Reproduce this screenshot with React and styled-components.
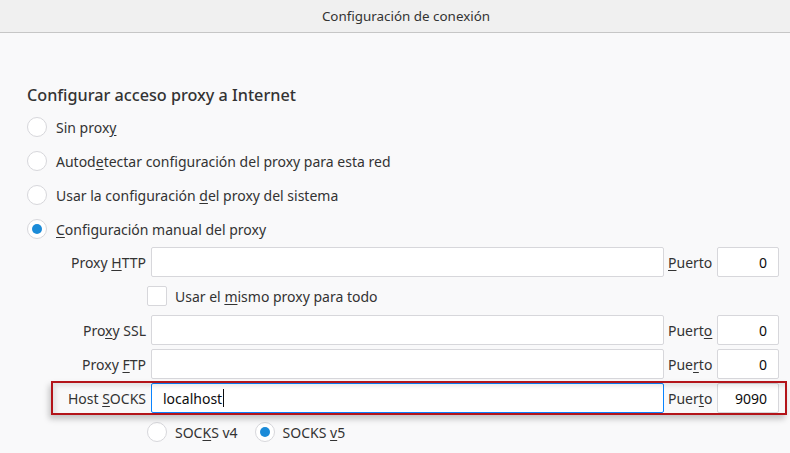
import React from 'react'
import styled, { createGlobalStyle } from 'styled-components'

const GlobalStyle = createGlobalStyle`
  html, body {
    margin: 0;
    padding: 0;
    background: #f9f9fa;
  }
  body {
    font-family: "Noto Sans", "Open Sans", sans-serif;
    color: #333;
  }
`

function App () {
  const http = { label: <>Proxy <U>H</U>TTP</>, port: <><U>P</U>uerto</>, value: '', portValue: '0' }
  const ssl = { label: <>Pro<U>x</U>y SSL</>, port: <>Puert<U>o</U></>, value: '', portValue: '0' }
  const ftp = { label: <>Proxy <U>F</U>TP</>, port: <>Pue<U>r</U>to</>, value: '', portValue: '0' }
  const socks = { label: <>Host <U>S</U>OCKS</>, port: <>Puer<U>t</U>o</>, value: 'localhost', portValue: '9090', focused: true }

  return (
    <Page>
      <GlobalStyle />
      <TitleBar>Configuración de conexión</TitleBar>
      <Content>
        <Heading>Configurar acceso proxy a Internet</Heading>
        <RadioList>
          <RadioRow><Radio /><span>Sin prox<U>y</U></span></RadioRow>
          <RadioRow><Radio /><span>Autod<U>e</U>tectar configuración del proxy para esta red</span></RadioRow>
          <RadioRow><Radio /><span>Usar la configuración <U>d</U>el proxy del sistema</span></RadioRow>
          <RadioRow><Radio checked /><span><U>C</U>onfiguración manual del proxy</span></RadioRow>
        </RadioList>
        <Fields>
          <Field row={http} />
          <OptionRow>
            <Checkbox />
            <span>Usar el <U>m</U>ismo proxy para todo</span>
          </OptionRow>
          <Field row={ssl} />
          <Field row={ftp} />
          <Field row={socks} highlighted />
          <OptionRow>
            <Radio />
            <OptionText>SOC<U>K</U>S v4</OptionText>
            <Radio checked />
            <span>SOCKS <U>v</U>5</span>
          </OptionRow>
        </Fields>
      </Content>
    </Page>
  )
}

const Field = ({ row, highlighted }) => (
  <FieldRow $highlighted={highlighted}>
    <FieldLabel>{row.label}</FieldLabel>
    <TextBox $focused={row.focused}>
      {row.value}
      {row.focused && <Caret />}
    </TextBox>
    <PortLabel>{row.port}</PortLabel>
    <TextBox $alignRight>{row.portValue}</TextBox>
  </FieldRow>
)

const Page = styled.div`
  width: 790px;
  height: 453px;
  overflow: hidden;
`

const TitleBar = styled.div`
  height: 32px;
  background: #f0f0f0;
  border-bottom: 1px solid #c6c6c6;
  display: flex;
  align-items: center;
  justify-content: center;
  padding-left: 22px;
  font-size: 13.4px;
  color: #333;
`

const Content = styled.div`
  padding: 50px 0 0 27px;
  display: flex;
  flex-direction: column;
`

const Heading = styled.h1`
  margin: 0 0 5px;
  height: 24px;
  line-height: 24px;
  font-size: 16.2px;
  font-weight: 500;
  color: #333;
`

const U = styled.u`
  text-underline-offset: 2px;
`

const RadioList = styled.div`
  display: flex;
  flex-direction: column;
  gap: 4px;
`

const RadioRow = styled.div`
  height: 30px;
  display: flex;
  align-items: center;
  gap: 9px;
  font-size: 14px;
`

const Radio = styled.span`
  width: 18px;
  height: 18px;
  flex: none;
  border: 1px solid #d7d7db;
  border-radius: 50%;
  background: #fff;
  display: flex;
  align-items: center;
  justify-content: center;

  &::after {
    content: '';
    display: ${props => props.checked ? 'block' : 'none'};
    width: 10px;
    height: 10px;
    border-radius: 50%;
    background: #1b8bd8;
  }
`

const Checkbox = styled.span`
  width: 18px;
  height: 18px;
  flex: none;
  border: 1px solid #d7d7db;
  border-radius: 2px;
  background: #fff;
`

const Fields = styled.div`
  margin: 3px 0 0 25px;
  width: 727px;
  display: flex;
  flex-direction: column;
  gap: 4px;
`

const FieldRow = styled.div`
  position: relative;
  height: 30px;
  display: grid;
  grid-template-columns: 95px 1fr 45px 62px;
  column-gap: 4px;
  align-items: center;
  font-size: 14px;

  &::after {
    content: '';
    display: ${props => props.$highlighted ? 'block' : 'none'};
    position: absolute;
    top: -2px;
    bottom: -2px;
    left: -1px;
    right: -8px;
    border: 2px solid #b3141a;
    box-shadow: -2px 4px 6px rgba(0, 0, 0, 0.22), inset 3px 3px 5px rgba(0, 0, 0, 0.1);
    pointer-events: none;
  }
`

const FieldLabel = styled.span`
  text-align: right;
  padding-right: 1px;
  white-space: nowrap;
`

const PortLabel = styled.span`
  white-space: nowrap;
`

const TextBox = styled.div`
  box-sizing: border-box;
  height: 30px;
  display: flex;
  align-items: center;
  justify-content: ${props => props.$alignRight ? 'flex-end' : 'flex-start'};
  padding: 0 11px;
  background: #fff;
  border: 1px solid ${props => props.$focused ? '#0a84ff' : '#d7d7db'};
  border-radius: 2px;
  font-size: 14px;
  color: #0c0c0d;
`

const Caret = styled.span`
  width: 1px;
  height: 18px;
  margin-left: 1px;
  background: #0c0c0d;
`

const OptionRow = styled.div`
  height: 30px;
  display: flex;
  align-items: center;
  gap: 8px;
  padding-left: 95px;
  font-size: 14px;
`

const OptionText = styled.span`
  margin-right: 9px;
`

export default App
